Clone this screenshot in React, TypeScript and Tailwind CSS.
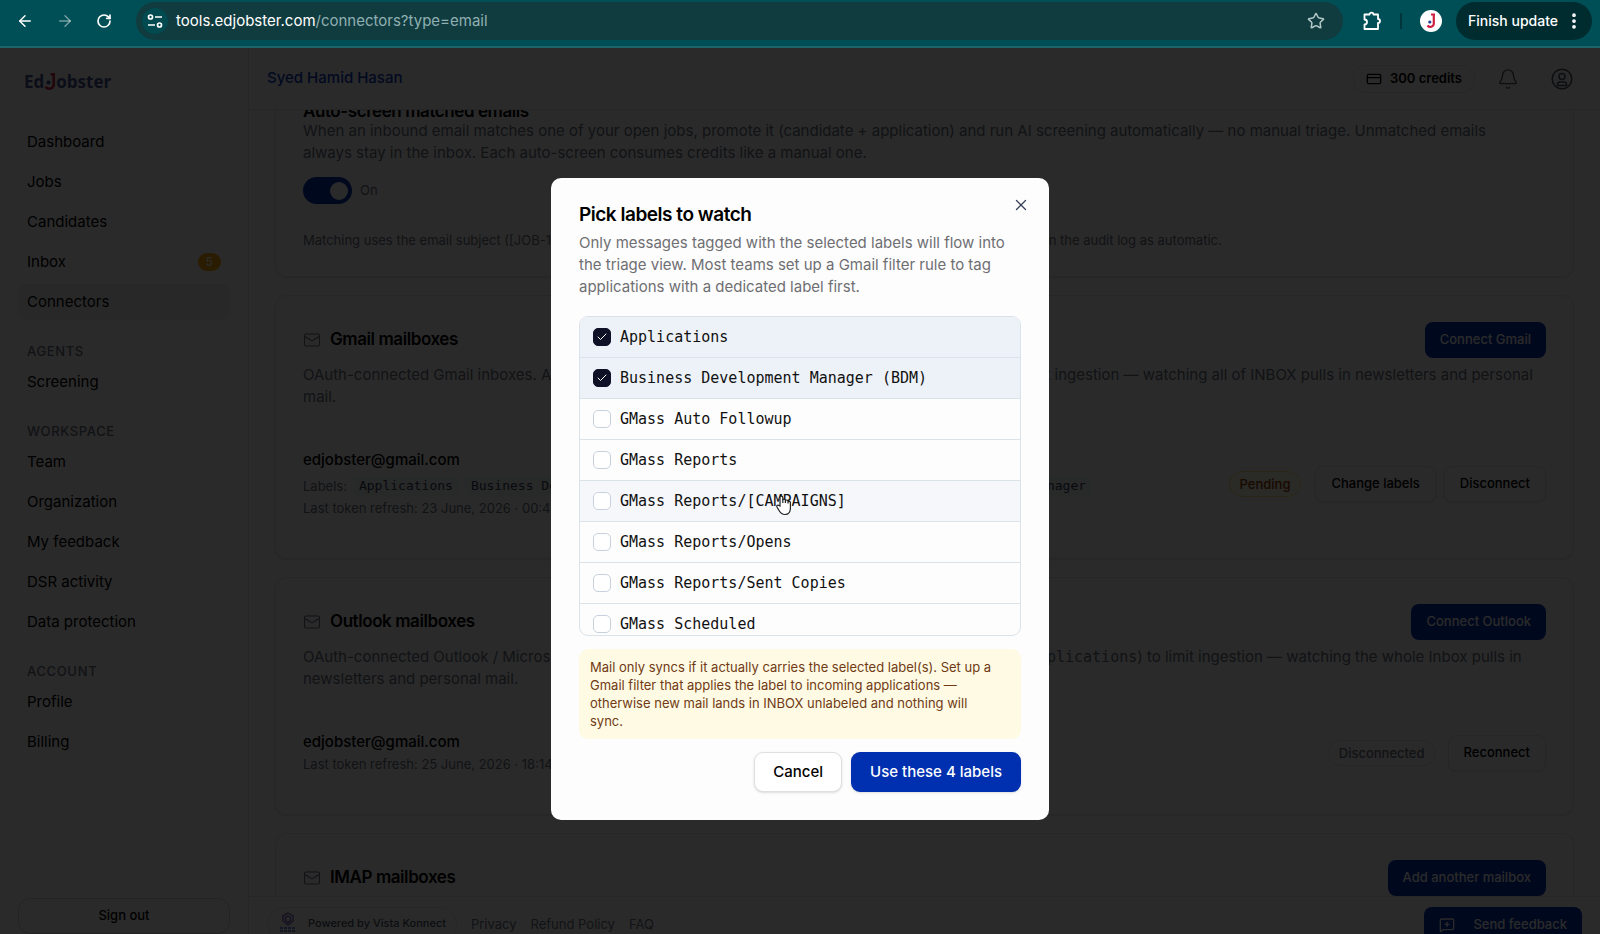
import {
  ArrowLeft,
  ArrowRight,
  Bell,
  Check,
  CreditCard,
  EllipsisVertical,
  Mail,
  MessageSquarePlus,
  RotateCw,
  Star,
  X,
} from 'lucide-react';
import { ReactNode, useState } from 'react';

const navGroups = [
  { title: '', items: ['Dashboard', 'Jobs', 'Candidates', 'Inbox', 'Connectors'] },
  { title: 'Agents', items: ['Screening'] },
  { title: 'Workspace', items: ['Team', 'Organization', 'My feedback', 'DSR activity', 'Data protection'] },
  { title: 'Account', items: ['Profile', 'Billing'] },
];

const labels = [
  'Applications',
  'Business Development Manager (BDM)',
  'GMass Auto Followup',
  'GMass Reports',
  'GMass Reports/[CAMPAIGNS]',
  'GMass Reports/Opens',
  'GMass Reports/Sent Copies',
  'GMass Scheduled',
  'Operations Coordinator',
  'Operations Manager',
];

const watchedLabels = [
  'Applications',
  'Business Development Manager (BDM)',
  'Operations Coordinator',
  'Operations Manager',
];

const BrowserBar = () => (
  <div className="flex h-12 shrink-0 items-center border-b-2 border-[#1f6468] bg-[#004f56] pb-1 pl-3 pr-2 text-white">
    <button aria-label="Back" className="mr-3.5 p-1">
      <ArrowLeft className="size-[18px]" />
    </button>
    <button aria-label="Forward" className="mr-3.5 p-1 text-white/45">
      <ArrowRight className="size-[18px]" />
    </button>
    <button aria-label="Reload" className="mr-5 p-1">
      <RotateCw className="size-4" strokeWidth={2.5} />
    </button>
    <div className="flex h-[38px] flex-1 items-center rounded-full bg-[#113c3f] pl-1.5 pr-[18px]">
      <button aria-label="Site information" className="flex size-[26px] items-center justify-center rounded-full bg-[#004a50]">
        <svg viewBox="0 0 16 16" className="size-4" fill="none" stroke="currentColor" strokeWidth="1.7">
          <circle cx="3.5" cy="4" r="2" />
          <path d="M8 4h7M1 12h7" />
          <circle cx="12.5" cy="12" r="2" />
        </svg>
      </button>
      <input
        aria-label="Address"
        className="sr-only"
        readOnly
        tabIndex={-1}
        value="tools.edjobster.com/connectors?type=email"
      />
      <div className="ml-2 flex-1 text-[15px]">
        tools.edjobster.com<span className="text-[#8fb0b2]">/connectors?type=email</span>
      </div>
      <button aria-label="Bookmark" className="text-[#b5c8c9]">
        <Star className="size-[18px]" />
      </button>
    </div>
    <button aria-label="Extensions" className="ml-[19px]">
      <svg viewBox="0 0 20 20" className="size-5" fill="none" stroke="currentColor" strokeWidth="1.8" strokeLinejoin="round">
        <path d="M2.5 3.5H7.5a2 1.8 0 0 1 4 0H16V8a2 2 0 0 1 0 4v6H2.5V13.500a2.500 2.500 0 0 0 0-5z" />
      </svg>
    </button>
    <div className="mx-[18px] h-4 w-0.5 bg-[#00363b]" />
    <button aria-label="Profile" className="mr-3.5">
      <svg viewBox="0 0 22 22" className="size-[22px]">
        <circle cx="11" cy="11" r="11" fill="#fff" />
        <path d="M11 4.500h4M13.800 4.500v9a3.500 3.500 0 0 1-6.300 2" fill="none" stroke="#cf2043" strokeWidth="2.200" />
        <circle cx="9.800" cy="12" r="1.600" fill="#23418f" />
      </svg>
    </button>
    <button className="flex h-[38px] items-center gap-1.5 rounded-full bg-[#002c30] pl-3 pr-2 text-sm font-medium">
      Finish update
      <EllipsisVertical className="size-5" strokeWidth={2.5} />
    </button>
  </div>
);

const Logo = () => (
  <a href="#" aria-label="EdJobster" className="flex items-center font-['Open_Sans',sans-serif] text-[17px] leading-6 font-bold text-[#44568f]">
    Ed
    <svg viewBox="0 0 12 22" className="h-[22px] w-3">
      <path d="M6.500 3.200h3.200v10a4.500 4.500 0 0 1-8.200 2.600" fill="none" stroke="#c92a44" strokeWidth="2.600" />
      <circle cx="4.500" cy="11.500" r="2" fill="#33479a" />
    </svg>
    obster
  </a>
);

const Sidebar = () => (
  <aside className="flex w-[249px] shrink-0 flex-col border-r border-gray-200 px-[18px] pt-[22px]">
    <div className="px-1.5">
      <Logo />
    </div>
    <nav className="mt-[30px] flex-1">
      {navGroups.map((group) => (
        <div key={group.title}>
          {group.title && (
            <h2 className="mt-[22px] mb-1 px-[9px] text-[13px] leading-[18px] font-medium tracking-wider text-gray-500 uppercase">
              {group.title}
            </h2>
          )}
          <ul className="space-y-1">
            {group.items.map((item) => (
              <li key={item}>
                <a
                  href="#"
                  className={`flex h-9 items-center justify-between rounded-lg px-[9px] text-[15px] ${item === 'Connectors' ? 'bg-gray-100' : ''}`}
                >
                  {item}
                  {item === 'Inbox' && (
                    <span className="rounded-full bg-[#ffaa00] px-2 text-xs leading-[18px] font-medium text-white">5</span>
                  )}
                </a>
              </li>
            ))}
          </ul>
        </div>
      ))}
    </nav>
    <button className="h-9 shrink-0 rounded-xl border border-gray-300 text-[13px] font-medium">Sign out</button>
  </aside>
);

const Header = () => (
  <header className="flex h-[62px] shrink-0 items-center border-b border-gray-200 pl-[18px] pr-[27px]">
    <span className="flex-1 text-[15px] font-medium text-[#0a3bc4]">Syed Hamid Hasan</span>
    <a href="#" className="flex h-7 items-center gap-2 rounded-xl border border-gray-200 px-3 text-[13px] font-semibold">
      <CreditCard className="size-4" />
      300 credits
    </a>
    <button aria-label="Notifications" className="ml-[22px] text-gray-600">
      <Bell className="size-[22px]" strokeWidth={1.5} />
    </button>
    <button aria-label="Account" className="ml-8 text-gray-600">
      <svg viewBox="0 0 22 22" className="size-[22px]" fill="none" stroke="currentColor" strokeWidth="1.5">
        <circle cx="11" cy="11" r="9.800" />
        <circle cx="11" cy="8.500" r="3" />
        <path d="M6.500 17.500v-1a2.500 2.500 0 0 1 2.500-2.500h4a2.500 2.500 0 0 1 2.500 2.500v1z" />
      </svg>
    </button>
  </header>
);

const Card = ({ children }: { children: ReactNode }) => (
  <section className="rounded-xl border border-gray-200 px-[27px] pt-[26px] pb-[39px] shadow-sm">{children}</section>
);

const CardTitle = ({ title, action }: { title: string; action: string }) => (
  <div className="flex h-9 items-center justify-between">
    <h2 className="flex items-center gap-[9px] text-[17px] font-semibold tracking-tight">
      <Mail className="size-[18px] text-gray-500" strokeWidth={1.5} />
      {title}
    </h2>
    <button className="h-9 rounded-lg bg-[#0030b0] px-[15px] text-[13px] font-medium text-white">{action}</button>
  </div>
);

const OutlineButton = ({ children }: { children: ReactNode }) => (
  <button className="h-9 rounded-lg border border-gray-200 px-[15px] text-[13px] font-medium shadow-sm">{children}</button>
);

const Connectors = () => (
  <main className="flex min-h-0 flex-1 flex-col justify-end overflow-hidden px-[26px]">
    <div className="space-y-[18px]">
      <section className="rounded-xl border border-gray-200 px-[27px] pb-[27px] shadow-sm">
        <h2 className="text-[17px] leading-[18px] font-semibold tracking-tight">Auto-screen matched emails</h2>
        <p className="pr-4 text-[15px] leading-[22px] text-gray-500">
          When an inbound email matches one of your open jobs, promote it (candidate + application) and run AI screening
          automatically — no manual triage. Unmatched emails always stay in the inbox. Each auto-screen consumes credits
          like a manual one.
        </p>
        <label className="mt-[13px] flex items-center gap-2 text-[13px] text-gray-500">
          <input type="checkbox" role="switch" defaultChecked className="peer sr-only" />
          <span className="flex h-[27px] w-[49px] items-center justify-end rounded-full bg-[#0030b0] px-1">
            <span className="size-[18px] rounded-full bg-white" />
          </span>
          On
        </label>
        <p className="mt-[27px] text-[13px] leading-[18px] text-gray-500">
          Matching uses the email subject ([JOB-123] or the job title). Every promoted candidate is recorded by
          source and shown in the audit log as automatic.
        </p>
      </section>

      <Card>
        <CardTitle title="Gmail mailboxes" action="Connect Gmail" />
        <p className="mt-1.5 text-[15px] leading-[22px] text-gray-500">
          OAuth-connected Gmail inboxes. Always scope each mailbox to one or more dedicated mail labels to limit
          ingestion — watching all of INBOX pulls in newsletters and personal mail.
        </p>
        <div className="mt-[41px] flex items-center gap-2">
          <div className="flex-1">
            <div className="text-[15px] leading-[22px] font-medium">edjobster@gmail.com</div>
            <div className="mt-1 flex items-center gap-1.5 text-[13px] leading-[22px] text-gray-500">
              Labels:
              {watchedLabels.map((label) => (
                <code key={label} className="rounded bg-slate-100 px-1.5 font-['DejaVu_Sans_Mono',monospace] leading-5 text-slate-700">
                  {label}
                </code>
              ))}
            </div>
            <div className="text-[13px] leading-[22px] text-gray-500">Last token refresh: 23 June, 2026 · 00:42</div>
          </div>
          <span className="mr-1.5 rounded-full border border-amber-200 bg-amber-50 px-2.5 text-[13px] leading-6 font-medium text-amber-800">
            Pending
          </span>
          <OutlineButton>Change labels</OutlineButton>
          <OutlineButton>Disconnect</OutlineButton>
        </div>
      </Card>

      <Card>
        <CardTitle title="Outlook mailboxes" action="Connect Outlook" />
        <p className="mt-1.5 text-[15px] leading-[22px] text-gray-500">
          OAuth-connected Outlook / Microsoft 365 inboxes. Scope each mailbox to a single folder (e.g.{' '}
          <code className="font-['DejaVu_Sans_Mono',monospace]">Inbox/Applications</code>) to limit ingestion — watching the
          whole Inbox pulls in newsletters and personal mail.
        </p>
        <div className="mt-[41px] flex items-center gap-3">
          <div className="flex-1">
            <div className="text-[15px] leading-[22px] font-medium">edjobster@gmail.com</div>
            <div className="text-[13px] leading-[22px] text-gray-500">Last token refresh: 25 June, 2026 · 18:14</div>
          </div>
          <span className="rounded-full border border-gray-200 px-2.5 text-[13px] leading-6 font-medium text-gray-500">
            Disconnected
          </span>
          <OutlineButton>Reconnect</OutlineButton>
        </div>
      </Card>

      <section className="rounded-t-xl border border-b-0 border-gray-200 px-[27px] pt-[26px]">
        <CardTitle title="IMAP mailboxes" action="Add another mailbox" />
      </section>
    </div>
  </main>
);

const Footer = () => (
  <footer className="flex h-[38px] shrink-0 items-start overflow-hidden border-t border-gray-200 pr-[18px] pl-[18px] pt-2.5">
    <a href="#" className="flex h-9 items-center gap-2.5 rounded-full border border-gray-200 px-2.5 pb-1 text-[11px] font-medium text-gray-600">
      <svg viewBox="0 0 20 24" className="h-6 w-5" fill="none" stroke="#7a5fc0" strokeWidth="1.400">
        <path d="M10 2l5 3v5l-5 4-5-4V5zM10 5l2.500 1.500v3L10 11.500 7.500 9.500v-3z" />
        <path d="M2 17h16M2 20h16" stroke="#4a5fd0" strokeDasharray="3 1" />
      </svg>
      Powered by Vista Konnect
    </a>
    <nav className="ml-3.5 flex h-9 flex-1 items-center gap-3.5 text-[13px] text-gray-500">
      <a href="#">Privacy</a>
      <a href="#">Refund Policy</a>
      <a href="#">FAQ</a>
    </nav>
    <button className="flex h-9 items-center gap-[18px] rounded-lg bg-[#0030b0] px-[15px] text-[13px] font-medium text-white">
      <MessageSquarePlus className="size-4" />
      Send feedback
    </button>
  </footer>
);

const HandCursor = () => (
  <svg viewBox="0 0 18 22" className="pointer-events-none absolute top-[13px] left-[195px] h-[22px] w-[18px]">
    <path
      d="M5 12V3.500a1.400 1.400 0 0 1 2.800 0V9V6.500a1.300 1.300 0 0 1 2.600 0V9V7.300a1.300 1.300 0 0 1 2.600 0V9.500V8.500a1.200 1.200 0 0 1 2.400 0V14c0 4-2 6.500-5.500 6.500S5.500 19 4.200 16.800L2 13c-.8-1.600 1-2.500 2-1.400z"
      fill="#fff"
      stroke="#222"
      strokeWidth="1.200"
    />
  </svg>
);

const LabelDialog = () => {
  const [selected, setSelected] = useState(watchedLabels);

  const toggle = (label: string) =>
    setSelected((prev) => (prev.includes(label) ? prev.filter((l) => l !== label) : [...prev, label]));

  return (
    <div
      role="dialog"
      aria-modal="true"
      aria-labelledby="dialog-title"
      className="relative w-[498px] rounded-[10px] bg-[#fdfdfd] px-7 pt-[25px] pb-7"
    >
      <button aria-label="Close" className="absolute top-[18px] right-[19px] text-gray-700">
        <X className="size-[18px]" strokeWidth={1.75} />
      </button>
      <h1 id="dialog-title" className="text-[19px] leading-6 font-semibold tracking-tight">
        Pick labels to watch
      </h1>
      <p className="mt-[5px] text-[15px] leading-[22px] text-[#6f6f73]">
        Only messages tagged with the selected labels will flow into the triage view. Most teams set up a Gmail filter
        rule to tag applications with a dedicated label first.
      </p>
      <ul className="mt-[18px] h-80 divide-y divide-[#dbe3ea] overflow-hidden rounded-[9px] border border-[#dbe3ea]">
        {labels.map((label) => {
          const checked = selected.includes(label);
          const hovered = label === 'GMass Reports/[CAMPAIGNS]';
          return (
            <li key={label} className={`relative ${checked ? 'bg-[#edf2f8]' : hovered ? 'bg-[#f5f7fb]' : ''}`}>
              <label className="flex h-10 cursor-pointer items-center gap-[9px] px-[13px] font-['DejaVu_Sans_Mono',monospace] text-[15px] text-[#111]">
                <input type="checkbox" checked={checked} onChange={() => toggle(label)} className="sr-only" />
                <span
                  className={`flex size-[18px] items-center justify-center rounded-[5px] border ${checked ? 'border-[#0f1226] bg-[#0f1226] text-white' : 'border-[#c7d1dd] bg-white'}`}
                >
                  {checked && <Check className="size-3" />}
                </span>
                {label}
              </label>
              {hovered && <HandCursor />}
            </li>
          );
        })}
      </ul>
      <p className="mt-[13px] rounded-[9px] bg-[#fefae4] py-[9px] pr-5 pl-[11px] text-[13px] leading-[18px] text-[#713a14]">
        Mail only syncs if it actually carries the selected label(s). Set up a Gmail filter that applies the label to
        incoming applications — otherwise new mail lands in INBOX unlabeled and nothing will sync.
      </p>
      <div className="mt-[13px] flex justify-end gap-[9px]">
        <button className="h-10 rounded-[9px] border border-[#dedfe3] bg-white px-[18px] text-[15px] font-medium shadow-sm">
          Cancel
        </button>
        <button className="h-10 rounded-[9px] bg-[#0030b0] px-[19px] text-[15px] font-medium text-white shadow-sm">
          Use these {selected.length} labels
        </button>
      </div>
    </div>
  );
};

export default function App() {
  return (
    <div className="flex h-screen flex-col overflow-hidden bg-white font-[Inter,sans-serif] text-black">
      <BrowserBar />
      <div className="relative flex min-h-0 flex-1">
        <Sidebar />
        <div className="flex min-w-0 flex-1 flex-col">
          <Header />
          <Connectors />
          <Footer />
        </div>
        <div className="absolute inset-0 flex items-center justify-center bg-black/[0.835] pt-4">
          <LabelDialog />
        </div>
      </div>
    </div>
  );
}
